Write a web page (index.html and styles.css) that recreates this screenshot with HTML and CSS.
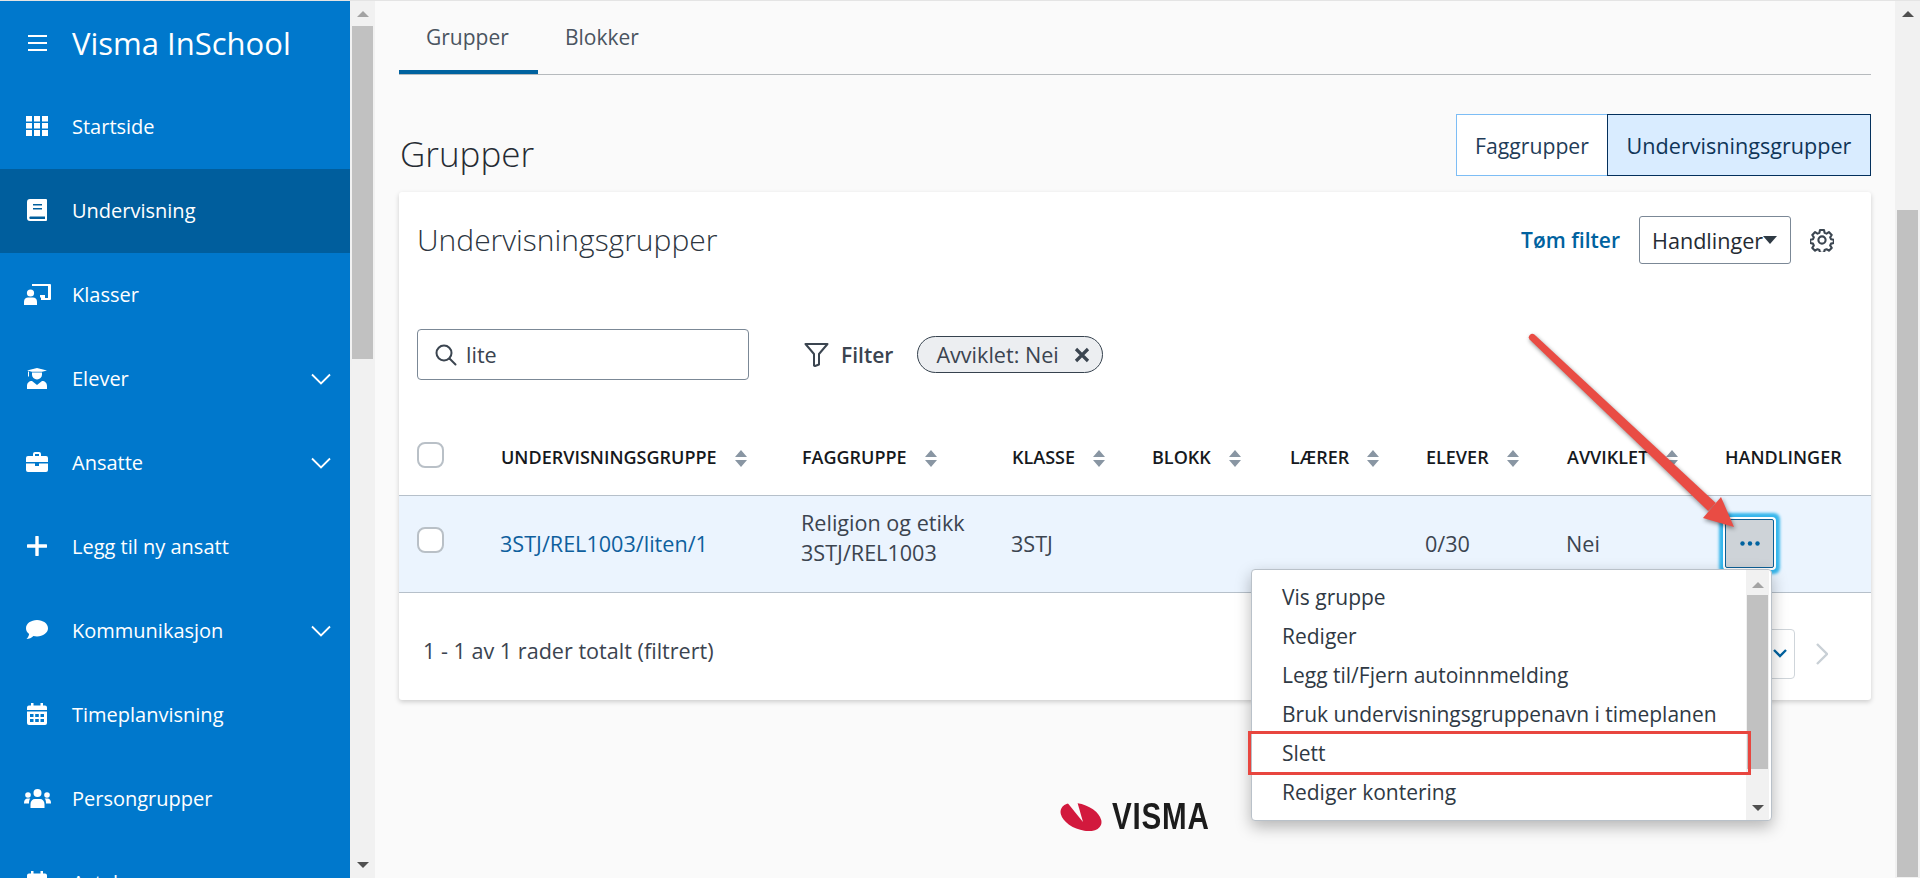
FILE: index.html
```html
<!DOCTYPE html>
<html lang="no">
<head>
<meta charset="utf-8">
<title>Visma InSchool</title>
<link rel="stylesheet" href="styles.css">
</head>
<body>
<div class="app">
  <aside class="sidebar">
    <header class="brand">
      <svg class="burger" width="20" height="16" viewBox="0 0 20 16"><path d="M0 1h19M0 8h19M0 15h19" stroke="#fff" stroke-width="1.8" fill="none"/></svg>
      <span class="brand-name">Visma InSchool</span>
    </header>
    <nav class="nav">
      <a class="nav-item"><span class="nav-icon"><svg width="22" height="20" viewBox="0 0 22 20" fill="#fff"><path d="M0 0h6v5.5H0zM8 0h6v5.5H8zM16 0h6v5.5h-6zM0 7h6v5.5H0zM8 7h6v5.5H8zM16 7h6v5.5h-6zM0 14h6v6H0zM8 14h6v6H8zM16 14h6v6h-6z"/></svg></span>Startside</a>
      <a class="nav-item active"><span class="nav-icon"><svg width="20" height="22" viewBox="0 0 20 22"><path fill="#fff" fill-rule="evenodd" d="M3 0h16a1 1 0 0 1 1 1v20a1 1 0 0 1-1 1H3a3 3 0 0 1-3-3V3a3 3 0 0 1 3-3zM6 5v1.6h9V5zM6 9v1.6h9V9zM3 17.5a1.4 1.4 0 0 0 0 2.4h15v-2.4z"/></svg></span>Undervisning</a>
      <a class="nav-item"><span class="nav-icon"><svg width="27" height="21" viewBox="0 0 27 21" fill="#fff"><path d="M8 0h18a1 1 0 0 1 1 1v14a1 1 0 0 1-1 1h-9v-2.5h-1V11h5v3h3V2H8z"/><circle cx="6.500" cy="9" r="3.600"/><path d="M0 21v-3.500C0 15 2 13.600 4 13.600h5c2 0 4 1.400 4 3.900V21z"/></svg></span>Klasser</a>
      <a class="nav-item"><span class="nav-icon"><svg width="20" height="21" viewBox="0 0 20 21" fill="#fff"><path d="M0 2.500 10 0l10 2.500-5 1.200H5zM1 3.500h1v5H1z"/><path d="M5 4.500h10v2a5 5 0 0 1-10 0z"/><path d="M0 21v-3c0-3 2-5 5-5l5 4 5-4c3 0 5 2 5 5v3z"/></svg></span>Elever<svg class="chev" width="20" height="12" viewBox="0 0 20 12"><path d="M1 1.500 10 10.500 19 1.500" fill="none" stroke="#fff" stroke-width="1.800"/></svg></a>
      <a class="nav-item"><span class="nav-icon"><svg width="22" height="20" viewBox="0 0 22 20"><path fill="#fff" fill-rule="evenodd" d="M7 4V2a2 2 0 0 1 2-2h4a2 2 0 0 1 2 2v2h5a2 2 0 0 1 2 2v4H0V6a2 2 0 0 1 2-2zM9 2v2h4V2zM0 11.500h9V14h4v-2.500h9V18a2 2 0 0 1-2 2H2a2 2 0 0 1-2-2z"/></svg></span>Ansatte<svg class="chev" width="20" height="12" viewBox="0 0 20 12"><path d="M1 1.500 10 10.500 19 1.500" fill="none" stroke="#fff" stroke-width="1.800"/></svg></a>
      <a class="nav-item"><span class="nav-icon"><svg width="20" height="20" viewBox="0 0 20 20"><path d="M10 1v18M1 10h18" stroke="#fff" stroke-width="3.400" stroke-linecap="round"/></svg></span>Legg til ny ansatt</a>
      <a class="nav-item"><span class="nav-icon"><svg width="22" height="20" viewBox="0 0 22 20"><path fill="#fff" d="M11 0c6 0 11 3.600 11 8.200s-5 8.200-11 8.200c-1.300 0-2.500-.2-3.600-.5C5.600 17.700 3 19 .5 19c1.300-1.300 2.300-3 2.600-5C1.200 12.500 0 10.500 0 8.200 0 3.600 5 0 11 0z"/></svg></span>Kommunikasjon<svg class="chev" width="20" height="12" viewBox="0 0 20 12"><path d="M1 1.500 10 10.500 19 1.500" fill="none" stroke="#fff" stroke-width="1.800"/></svg></a>
      <a class="nav-item"><span class="nav-icon"><svg width="20" height="22" viewBox="0 0 20 22"><path fill="#fff" fill-rule="evenodd" d="M4 0h2.500v2.500h7V0H16v2.500h2a2 2 0 0 1 2 2V7H0V4.500a2 2 0 0 1 2-2h2zM0 8.500h20V20a2 2 0 0 1-2 2H2a2 2 0 0 1-2-2zM3 11v3h3.500v-3zM8.200 11v3h3.600v-3zM13.500 11v3H17v-3zM3 16v3h3.500v-3zM8.200 16v3h3.600v-3zM13.500 16v3H17v-3z"/></svg></span>Timeplanvisning</a>
      <a class="nav-item"><span class="nav-icon"><svg width="27" height="19" viewBox="0 0 27 19" fill="#fff"><circle cx="13.500" cy="4" r="4"/><circle cx="4" cy="6" r="2.800"/><circle cx="23" cy="6" r="2.800"/><path d="M6.500 19v-4c0-3 2-5 4.500-5h5c2.500 0 4.500 2 4.500 5v4zM0 14c0-3 1.500-4.500 3.500-4.500h2.800C5.200 10.700 5 12.500 5 14.500H0zM27 14c0-3-1.500-4.500-3.500-4.500h-2.800c1.100 1.200 1.300 3 1.300 5h5z"/></svg></span>Persongrupper</a>
      <a class="nav-item"><span class="nav-icon"><svg width="20" height="22" viewBox="0 0 20 22"><path fill="#fff" d="M4 0h2.500v2.500h7V0H16v2.500h2a2 2 0 0 1 2 2V22H0V4.500a2 2 0 0 1 2-2h2z"/></svg></span>Avtaler</a>
    </nav>
  </aside>

  <div class="scrollbar">
    <span class="sb-arrow up"></span>
    <span class="sb-thumb side"></span>
    <span class="sb-rest"></span>
    <span class="sb-arrow down"></span>
  </div>

  <main class="main">
    <div class="tabs">
      <a class="tab current">Grupper</a>
      <a class="tab">Blokker</a>
    </div>

    <div class="page-head">
      <h1 class="page-title">Grupper</h1>
      <div class="toggle">
        <button class="toggle-btn">Faggrupper</button>
        <button class="toggle-btn on">Undervisningsgrupper</button>
      </div>
    </div>

    <section class="card">
      <div class="card-head">
        <h2 class="card-title">Undervisningsgrupper</h2>
        <div class="card-tools">
          <a class="clear">Tøm filter</a>
          <button class="actions-btn">Handlinger<span class="caret"></span></button>
          <svg class="gear" width="24" height="24" viewBox="0 0 24 24" fill="none" stroke="#3b4550" stroke-width="2.100" stroke-linejoin="round"><path d="M10 2h4l.6 2.800 1.900.8 2.400-1.500 2.800 2.800-1.500 2.400.8 1.900 2.800.6v3.200l-2.800.6-.8 1.900 1.500 2.400-2.800 2.800-2.400-1.500-1.900.8-.6 2.800h-4l-.6-2.800-1.900-.8-2.400 1.500-2.800-2.800 1.500-2.400-.8-1.900-2.800-.6v-3.200l2.800-.6.8-1.900-1.500-2.400 2.800-2.800 2.400 1.500 1.900-.8z"/><circle cx="12" cy="12" r="3.600"/></svg>
        </div>
      </div>

      <div class="filters">
        <label class="search">
          <svg width="22" height="22" viewBox="0 0 22 22" fill="none" stroke="#3b4550" stroke-width="2"><circle cx="9" cy="9" r="7.500"/><path d="m14.500 14.500 6 6" stroke-linecap="round"/></svg>
          <span class="search-value">lite</span>
        </label>
        <a class="filter-btn">
          <svg width="25" height="25" viewBox="0 0 25 25" fill="none" stroke="#3b4550" stroke-width="2" stroke-linejoin="round"><path d="M1.500 2h22l-8.500 10v10.500l-4 1.500-1-.5V12z"/></svg>
          Filter
        </a>
        <span class="chip">Avviklet: Nei<svg width="16" height="16" viewBox="0 0 16 16"><path d="m2 2 12 12M14 2 2 14" stroke="#3b4550" stroke-width="3.200"/></svg></span>
      </div>

      <table class="grid">
        <colgroup>
          <col class="c-check"><col class="c-group"><col class="c-fag"><col class="c-klasse"><col class="c-blokk"><col class="c-laerer"><col class="c-elever"><col class="c-avv"><col class="c-act">
        </colgroup>
        <thead>
          <tr>
            <th><span class="check"></span></th>
            <th>Undervisningsgruppe<svg class="sort" width="12" height="17" viewBox="0 0 12 17"><path d="M6 0 12 7H0zM0 10h12l-6 7z"/></svg></th>
            <th>Faggruppe<svg class="sort" width="12" height="17" viewBox="0 0 12 17"><path d="M6 0 12 7H0zM0 10h12l-6 7z"/></svg></th>
            <th>Klasse<svg class="sort" width="12" height="17" viewBox="0 0 12 17"><path d="M6 0 12 7H0zM0 10h12l-6 7z"/></svg></th>
            <th>Blokk<svg class="sort" width="12" height="17" viewBox="0 0 12 17"><path d="M6 0 12 7H0zM0 10h12l-6 7z"/></svg></th>
            <th>Lærer<svg class="sort" width="12" height="17" viewBox="0 0 12 17"><path d="M6 0 12 7H0zM0 10h12l-6 7z"/></svg></th>
            <th>Elever<svg class="sort" width="12" height="17" viewBox="0 0 12 17"><path d="M6 0 12 7H0zM0 10h12l-6 7z"/></svg></th>
            <th>Avviklet<svg class="sort" width="12" height="17" viewBox="0 0 12 17"><path d="M6 0 12 7H0zM0 10h12l-6 7z"/></svg></th>
            <th>Handlinger</th>
          </tr>
        </thead>
        <tbody>
          <tr>
            <td><span class="check raised"></span></td>
            <td><a class="link">3STJ/REL1003/liten/1</a></td>
            <td><span class="two-line">Religion og etikk<br>3STJ/REL1003</span></td>
            <td>3STJ</td>
            <td></td>
            <td></td>
            <td>0/30</td>
            <td>Nei</td>
            <td><button class="more"><svg width="20" height="5" viewBox="0 0 20 5" fill="#00629f"><circle cx="2.500" cy="2.500" r="2.200"/><circle cx="10" cy="2.500" r="2.200"/><circle cx="17.500" cy="2.500" r="2.200"/></svg></button></td>
          </tr>
        </tbody>
      </table>

      <div class="card-foot">
        <span>1 - 1 av 1 rader totalt (filtrert)</span>
        <div class="pager">
          <span class="page-size"><svg width="14" height="9" viewBox="0 0 14 9"><path d="m1 1 6 6 6-6" fill="none" stroke="#00629f" stroke-width="2.400"/></svg></span>
          <svg class="next" width="12" height="22" viewBox="0 0 12 22"><path d="m1 1 10 10L1 21" fill="none" stroke="#c9d0d6" stroke-width="2.400"/></svg>
        </div>
      </div>

      <div class="menu">
        <ul class="menu-list">
          <li>Vis gruppe</li>
          <li>Rediger</li>
          <li>Legg til/Fjern autoinnmelding</li>
          <li>Bruk undervisningsgruppenavn i timeplanen</li>
          <li>Slett</li>
          <li>Rediger kontering</li>
        </ul>
        <div class="scrollbar mini">
          <span class="sb-arrow up small"></span>
          <span class="sb-thumb menu-thumb"></span>
          <span class="sb-rest"></span>
          <span class="sb-arrow down small"></span>
        </div>
        <span class="mark"></span>
      </div>
    </section>

    <div class="logo">
      <svg width="42" height="29" viewBox="0 0 42 29"><ellipse cx="21" cy="15" rx="21.500" ry="12.500" transform="rotate(22 21 15)" fill="#d2193d"/><path d="M6 -1 17 -1 23 20z" fill="#fafafa"/></svg>
      <span class="logo-text">VISMA</span>
    </div>
  </main>

  <div class="scrollbar">
    <span class="sb-arrow up"></span>
    <span class="sb-rest top"></span>
    <span class="sb-thumb page"></span>
  </div>
</div>

<svg class="arrow" width="1920" height="878" viewBox="0 0 1920 878">
  <path d="M1534.4 334.500 1715.800 503 1708.200 511 1529.600 339.500A3.500 3.500 0 0 1 1534.400 334.500z" fill="#e94c44"/>
  <path d="M1721 497 1734 527 1703 518z" fill="#e94c44"/>
</svg>
</body>
</html>
```

FILE: styles.css
```css
* { box-sizing: border-box; }
html, body { margin: 0; height: 100%; overflow: hidden; }
body { font-family: "Open Sans", sans-serif; font-size: 21.6px; color: #3b4450; background: #fafafa; position: relative; }
button { font: inherit; color: inherit; }
h1, h2 { margin: 0; font-weight: 300; }

.app { display: flex; height: 878px; border-top: 1px solid #e4e4e4; overflow: hidden; }

/* sidebar */
.sidebar { width: 350px; flex: none; background: #0078cc; color: #fff; overflow: hidden; }
.brand { height: 84px; display: flex; align-items: center; padding-left: 28px; }
.burger { margin-right: 24px; flex: none; }
.brand-name { font-size: 31px; }
.nav { display: flex; flex-direction: column; }
.nav-item { height: 84px; flex: none; display: flex; align-items: center; padding: 0 0 2px 22px; font-size: 20px; position: relative; }
.nav-item.active { background: #005e9d; }
.nav-icon { width: 30px; margin-right: 20px; display: flex; justify-content: center; flex: none; }
.chev { margin: 2px 19px 0 auto; }

/* scrollbars */
.scrollbar { width: 25px; flex: none; background: #f1f1f1; display: flex; flex-direction: column; align-items: center; }
.sb-arrow { flex: none; width: 0; height: 0; border-left: 6px solid transparent; border-right: 6px solid transparent; }
.sb-arrow.up { border-bottom: 6px solid #a3a3a3; margin: 10px 0 9px; }
.scrollbar:last-child .sb-arrow.up { border-bottom-color: #505050; }
.sb-arrow.down { border-top: 6px solid #505050; margin: 9px 0 10px; }
.sb-thumb { width: 21px; background: #c1c1c1; flex: none; }
.sb-thumb.side { height: 333px; }
.sb-thumb.page { height: 667px; }
.sb-rest { flex: 1; }
.sb-rest.top { flex: none; height: 184px; }

/* main */
.main { flex: 1; min-width: 0; padding: 0 24px; background: #fafafa; }
.tabs { display: flex; height: 74px; border-bottom: 1px solid #b6babd; }
.tab { height: 73px; width: 139px; padding: 2px 0 0 27px; display: flex; align-items: center; font-size: 21px; color: #4a5460; border-bottom: 4px solid transparent; margin-bottom: -1px; }
.tab.current { border-bottom-color: #00629f; }
.page-head { display: flex; justify-content: space-between; align-items: flex-end; margin-top: 39px; }
.page-title { font-size: 35px; color: #252b33; line-height: 46px; padding-left: 1px; margin-bottom: -1px; }
.toggle { display: flex; height: 62px; }
.toggle-btn { width: 151px; background: #fff; border: 1px solid #7dbdf5; padding: 0; font-size: 21.2px; color: #1f3c58; border-right: 0; }
.toggle-btn.on { width: 264px; font-size: 21.6px; background: #d9ecff; border: 1px solid #03305c; color: #0f3558; }

/* card */
.card { margin-top: 16px; height: 508px; background: #fff; border-radius: 3px; box-shadow: 0 2px 5px rgba(0,0,0,.18); position: relative; }
.card-head { height: 137px; padding: 24px 37px 0 18px; display: flex; justify-content: space-between; align-items: flex-start; }
.card-title { font-size: 30px; color: #2c3540; line-height: 48px; }
.card-tools { display: flex; align-items: center; height: 48px; }
.clear { color: #00629f; font-weight: 600; margin-right: 19px; font-size: 21px; }
.actions-btn { width: 152px; height: 48px; background: #fff; border: 1px solid #7b8896; border-radius: 3px; padding: 0 12px; display: flex; align-items: center; color: #252b33; }
.caret { width: 0; height: 0; border: 7px solid transparent; border-top: 8px solid #2f3a44; border-bottom: 0; flex: none; }
.gear { margin-left: 19px; }

.filters { display: flex; align-items: center; height: 51px; padding-left: 18px; }
.search { width: 332px; height: 51px; border: 1px solid #7b8896; border-radius: 4px; display: flex; align-items: center; padding-left: 17px; }
.search-value { margin-left: 9px; }
.filter-btn { display: flex; align-items: center; gap: 12px; margin-left: 55px; font-weight: 600; font-size: 21px; }
.chip { margin-left: 24px; height: 37px; padding: 0 12px 0 18px; display: flex; align-items: center; gap: 15px; background: #eceef1; border: 1px solid #36424e; border-radius: 19px; }

/* table */
.grid { width: 1472px; table-layout: fixed; border-collapse: collapse; }
.c-check { width: 101px; } .c-group { width: 301px; } .c-fag { width: 210px; } .c-klasse { width: 140px; } .c-blokk { width: 138px; } .c-laerer { width: 136px; } .c-elever { width: 141px; } .c-avv { width: 158px; } .c-act { width: 147px; }
.grid th { height: 115px; padding: 0 0 27px 1px; vertical-align: bottom; text-align: left; font-size: 18px; font-weight: 600; line-height: 22px; text-transform: uppercase; color: #16191d; border-bottom: 1px solid #b6c0ca; white-space: nowrap; }
.grid td { height: 97px; padding: 0; vertical-align: middle; line-height: 30px; background: #ebf4fe; border-bottom: 1px solid #b6c0ca; }
.grid th:first-child, .grid td:first-child { padding-left: 18px; }
.two-line { display: block; padding-bottom: 12px; }
.check { display: block; width: 27px; height: 26px; background: #fff; border: 2px solid #b9c0c7; border-radius: 8px; }
.check.raised { margin-top: -8px; }
.sort { fill: #8996a3; margin-left: 18px; vertical-align: -3px; }
.link { color: #0e5f9d; }
.more { width: 49px; height: 49px; margin-left: 1px; display: flex; align-items: center; justify-content: center; padding: 0; background: #ced3d8; border: 1px solid #0b5f96; border-radius: 2px; box-shadow: 0 0 0 2px #fff, 0 0 3px 6px #35b6ec; }

/* footer */
.card-foot { height: 107px; display: flex; justify-content: space-between; align-items: center; padding: 8px 43px 0 24px; }
.pager { display: flex; align-items: center; gap: 21px; margin-top: 7px; }
.page-size { width: 135px; height: 50px; border: 1px solid #cfd5da; border-radius: 4px; display: flex; align-items: center; justify-content: flex-end; padding-right: 7px; }

/* dropdown menu */
.menu { position: absolute; top: 377px; right: 99px; width: 521px; height: 252px; display: flex; background: #fff; border: 1px solid #b9c1c9; border-radius: 4px; box-shadow: 0 6px 16px rgba(0,0,0,.28); }
.menu-list { flex: 1; list-style: none; margin: 0; padding: 8px 0 0 30px; font-size: 21px; color: #2f3944; }
.menu-list li { height: 39px; line-height: 39px; white-space: nowrap; }
.scrollbar.mini { width: 23px; margin-right: 2px; border-radius: 0; }
.sb-arrow.up.small { margin: 12px 0 7px; }
.sb-arrow.down.small { margin: 9px 0 9px; }
.menu-thumb { width: 21px; height: 174px; }
.mark { position: absolute; left: -4px; top: 161px; width: 503px; height: 44px; border: 3px solid #e8463f; }

/* logo */
.logo { display: flex; justify-content: center; align-items: center; gap: 10px; margin-top: 100px; height: 32px; }
.logo-text { display: block; width: 98px; font-family: "Liberation Sans", sans-serif; font-weight: 700; font-size: 37px; letter-spacing: 1px; color: #1c1c1c; line-height: 32px; padding-top: 2px; white-space: nowrap; transform: scaleX(.8); transform-origin: left center; }

/* annotation */
.arrow { position: absolute; left: 0; top: 0; pointer-events: none; filter: drop-shadow(1px 2px 2px rgba(0,0,0,.45)); }
```
